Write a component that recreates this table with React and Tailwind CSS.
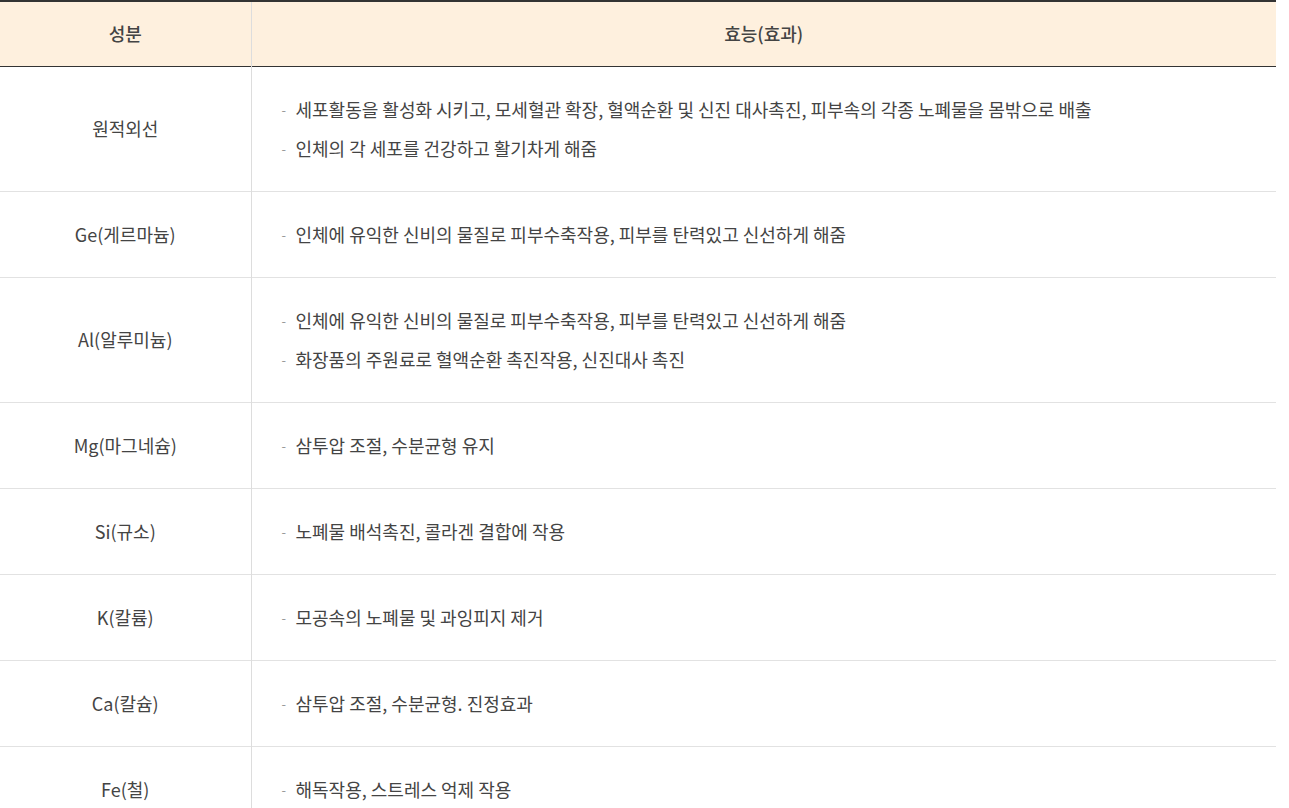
import React from "react";

const rows = [
  {
    name: "원적외선",
    effects: [
      "세포활동을 활성화 시키고, 모세혈관 확장, 혈액순환 및 신진 대사촉진, 피부속의 각종 노폐물을 몸밖으로 배출",
      "인체의 각 세포를 건강하고 활기차게 해줌",
    ],
  },
  { name: "Ge(게르마늄)", effects: ["인체에 유익한 신비의 물질로 피부수축작용, 피부를 탄력있고 신선하게 해줌"] },
  {
    name: "Al(알루미늄)",
    effects: [
      "인체에 유익한 신비의 물질로 피부수축작용, 피부를 탄력있고 신선하게 해줌",
      "화장품의 주원료로 혈액순환 촉진작용, 신진대사 촉진",
    ],
  },
  { name: "Mg(마그네슘)", effects: ["삼투압 조절, 수분균형 유지"] },
  { name: "Si(규소)", effects: ["노폐물 배석촉진, 콜라겐 결합에 작용"] },
  { name: "K(칼륨)", effects: ["모공속의 노폐물 및 과잉피지 제거"] },
  { name: "Ca(칼슘)", effects: ["삼투압 조절, 수분균형. 진정효과"] },
  { name: "Fe(철)", effects: ["해독작용, 스트레스 억제 작용"] },
];

const App = () => {
  return (
    <div
      className="w-[1289px] h-[808px] overflow-hidden bg-white text-[#444] text-[18px]"
      style={{ fontFamily: '"Noto Sans CJK KR", "Noto Sans", sans-serif' }}
    >
      <table className="w-[1276px] border-collapse">
        <colgroup>
          <col className="w-[251px]" />
          <col />
        </colgroup>
        <thead>
          <tr className="bg-[#fef0de] border-t-2 border-b border-t-[#333] border-b-[#333]">
            <th className="h-[65px] font-medium text-center border-r border-r-[#ddd] p-0">성분</th>
            <th className="h-[65px] font-medium text-center p-0">효능(효과)</th>
          </tr>
        </thead>
        <tbody>
          {rows.map((row, i) => (
            <tr key={i} className="border-b border-b-[#e2e2e2]">
              <td className="text-center align-middle border-r border-r-[#ddd] p-0">{row.name}</td>
              <td className="pl-[30px] py-[30px] align-middle">
                <ul className="flex flex-col gap-[14px]">
                  {row.effects.map((e, j) => (
                    <li key={j} className="leading-[25px] flex items-center">
                      <span className="text-[#999] text-[13px] w-[14px]">-</span>
                      <span>{e}</span>
                    </li>
                  ))}
                </ul>
              </td>
            </tr>
          ))}
        </tbody>
      </table>
    </div>
  );
};

export default App;
